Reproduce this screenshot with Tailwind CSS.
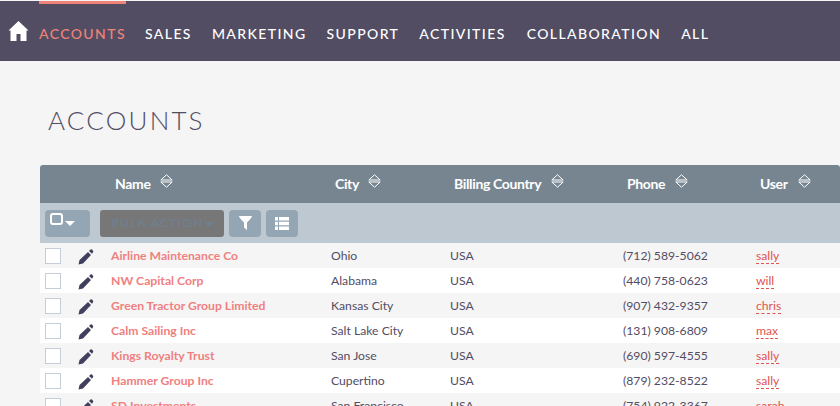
<!DOCTYPE html>
<html lang="en">
<head>
  <meta charset="UTF-8" />
  <title>Accounts</title>
  <script src="https://cdn.jsdelivr.net/npm/@tailwindcss/browser@4"></script>
</head>
<body class="bg-[#f5f5f5] h-[406px] overflow-hidden font-['Lato','Noto_Sans',sans-serif]">
  <nav class="mt-px h-[60px] bg-[#534d64] flex items-start text-white text-[14px] font-medium tracking-[1.4px]">
    <a class="ml-[8px] mt-[20px] w-[21px] mr-[10px]">
      <svg width="21" height="20" viewBox="0 0 21 20" fill="#fff"><path d="M10.5 0 L20.5 9.5 L18.5 9.5 L18.5 20 L12.5 20 L12.5 13 L8.5 13 L8.5 20 L2.5 20 L2.5 9.5 L0.5 9.5 Z"/></svg>
    </a>
    <a class="h-[60px] w-[87px] border-t-[3px] border-[#f08377] pt-[19px] text-[#f08377] mr-[19px]">ACCOUNTS</a>
    <a class="pt-[22px] mr-[20px]">SALES</a>
    <a class="pt-[22px] mr-[20px]">MARKETING</a>
    <a class="pt-[22px] mr-[20px]">SUPPORT</a>
    <a class="pt-[22px] mr-[21px]">ACTIVITIES</a>
    <a class="pt-[22px] mr-[20px]">COLLABORATION</a>
    <a class="pt-[22px]">ALL</a>
  </nav>

  <h1 class="ml-[48px] mt-[42px] h-[62px] text-[26px] leading-[34px] font-light tracking-[2.2px] text-[#534d64]">ACCOUNTS</h1>

  <div class="ml-[40px] w-[800px] text-[12.2px]">
    <div class="h-[38px] pb-[2px] bg-[#778591] rounded-t-[3px] grid grid-cols-[70px_220px_119px_173px_133px_85px] items-center text-white font-bold text-[14px] tracking-[-0.35px]">
      <div></div>
      <div class="pl-[5px] flex items-center gap-[9px]">Name
        <svg class="mb-[4px]" width="13" height="14" viewBox="0 0 13 14" fill="none" stroke="#fff" stroke-width="1"><path d="M0.8 6 L6.5 0.8 L12.2 6 Z M0.8 8 L6.5 13.2 L12.2 8 Z"/></svg>
      </div>
      <div class="pl-[5px] flex items-center gap-[9px]">City
        <svg class="mb-[4px]" width="13" height="14" viewBox="0 0 13 14" fill="none" stroke="#fff" stroke-width="1"><path d="M0.8 6 L6.5 0.8 L12.2 6 Z M0.8 8 L6.5 13.2 L12.2 8 Z"/></svg>
      </div>
      <div class="pl-[5px] flex items-center gap-[10px] whitespace-nowrap">Billing Country
        <svg class="mb-[4px]" width="13" height="14" viewBox="0 0 13 14" fill="none" stroke="#fff" stroke-width="1"><path d="M0.8 6 L6.5 0.8 L12.2 6 Z M0.8 8 L6.5 13.2 L12.2 8 Z"/></svg>
      </div>
      <div class="pl-[5px] flex items-center gap-[10px]">Phone
        <svg class="mb-[4px]" width="13" height="14" viewBox="0 0 13 14" fill="none" stroke="#fff" stroke-width="1"><path d="M0.8 6 L6.5 0.8 L12.2 6 Z M0.8 8 L6.5 13.2 L12.2 8 Z"/></svg>
      </div>
      <div class="pl-[5px] flex items-center gap-[10px]">User
        <svg class="mb-[4px]" width="13" height="14" viewBox="0 0 13 14" fill="none" stroke="#fff" stroke-width="1"><path d="M0.8 6 L6.5 0.8 L12.2 6 Z M0.8 8 L6.5 13.2 L12.2 8 Z"/></svg>
      </div>
    </div>

    <div class="h-[40px] bg-[#bec8d1] flex items-center pl-[5px]">
      <button class="w-[45px] h-[27px] rounded-[4px] bg-[#94a5b4] flex items-center pl-[5px]">
        <span class="block w-[13px] h-[12px] border-[2px] border-white rounded-[3px] mb-[8px]"></span>
        <span class="block ml-[2px] mt-[1px] border-x-[5px] border-x-transparent border-t-[5px] border-t-white"></span>
      </button>
      <button class="ml-[10px] w-[124px] h-[27px] rounded-[3px] bg-[#777777] flex items-center pl-[11px] text-[#6f7f8e] text-[12px] font-bold tracking-[1.2px] whitespace-nowrap">BULK ACTION
        <span class="block mt-[3px] border-x-[5px] border-x-transparent border-t-[5px] border-t-[#6f7f8e]"></span>
      </button>
      <button class="ml-[5px] w-[32px] h-[27px] rounded-[4px] bg-[#94a5b4] flex items-center justify-center">
        <svg width="13" height="14" viewBox="0 0 13 14" fill="#fff"><path d="M0 0 H13 Q13 1.5 8 6.5 V14 L5 11.5 V6.5 Q0 1.5 0 0 Z"/></svg>
      </button>
      <button class="ml-[5px] w-[32px] h-[27px] rounded-[4px] bg-[#94a5b4] flex items-center justify-center">
        <svg width="14" height="13" viewBox="0 0 14 13" fill="#fff"><path d="M0 0 H3 V3.5 H0 Z M4 0 H14 V3.5 H4 Z M0 4.75 H3 V8.25 H0 Z M4 4.75 H14 V8.25 H4 Z M0 9.5 H3 V13 H0 Z M4 9.5 H14 V13 H4 Z"/></svg>
      </button>
    </div>

    <div class="h-[25px] pt-px bg-[#f5f5f5] grid grid-cols-[71px_220px_119px_173px_133px_84px] items-center text-[#534d64]">
      <div class="flex items-center pl-[5px] gap-[17px]">
        <span class="block w-4 h-4 bg-white border border-[#c5ced6]"></span>
        <svg class="mt-[2px]" width="16" height="16" viewBox="0 0 16 16" fill="#40405e"><path d="M0.5 15.5 L1.5 11 L10 3 L13 6 L5 14.5 Z M11 2 L12.5 0.6 Q13.2 0 14 0.6 L15 1.8 Q15.6 2.5 15 3.2 L14 4.8 Z"/></svg>
      </div>
      <a class="font-bold text-[#f08080] whitespace-nowrap">Airline Maintenance Co</a>
      <div>Ohio</div>
      <div>USA</div>
      <div>(712) 589-5062</div>
      <div><span class="text-[#e2544f] border-b border-dashed border-[#e2544f]">sally</span></div>
    </div>
    <div class="h-[25px] pt-px bg-white grid grid-cols-[71px_220px_119px_173px_133px_84px] items-center text-[#534d64]">
      <div class="flex items-center pl-[5px] gap-[17px]">
        <span class="block w-4 h-4 bg-white border border-[#c5ced6]"></span>
        <svg class="mt-[2px]" width="16" height="16" viewBox="0 0 16 16" fill="#40405e"><path d="M0.5 15.5 L1.5 11 L10 3 L13 6 L5 14.5 Z M11 2 L12.5 0.6 Q13.2 0 14 0.6 L15 1.8 Q15.6 2.5 15 3.2 L14 4.8 Z"/></svg>
      </div>
      <a class="font-bold text-[#f08080] whitespace-nowrap">NW Capital Corp</a>
      <div>Alabama</div>
      <div>USA</div>
      <div>(440) 758-0623</div>
      <div><span class="text-[#e2544f] border-b border-dashed border-[#e2544f]">will</span></div>
    </div>
    <div class="h-[25px] pt-px bg-[#f5f5f5] grid grid-cols-[71px_220px_119px_173px_133px_84px] items-center text-[#534d64]">
      <div class="flex items-center pl-[5px] gap-[17px]">
        <span class="block w-4 h-4 bg-white border border-[#c5ced6]"></span>
        <svg class="mt-[2px]" width="16" height="16" viewBox="0 0 16 16" fill="#40405e"><path d="M0.5 15.5 L1.5 11 L10 3 L13 6 L5 14.5 Z M11 2 L12.5 0.6 Q13.2 0 14 0.6 L15 1.8 Q15.6 2.5 15 3.2 L14 4.8 Z"/></svg>
      </div>
      <a class="font-bold text-[#f08080] whitespace-nowrap">Green Tractor Group Limited</a>
      <div>Kansas City</div>
      <div>USA</div>
      <div>(907) 432-9357</div>
      <div><span class="text-[#e2544f] border-b border-dashed border-[#e2544f]">chris</span></div>
    </div>
    <div class="h-[25px] pt-px bg-white grid grid-cols-[71px_220px_119px_173px_133px_84px] items-center text-[#534d64]">
      <div class="flex items-center pl-[5px] gap-[17px]">
        <span class="block w-4 h-4 bg-white border border-[#c5ced6]"></span>
        <svg class="mt-[2px]" width="16" height="16" viewBox="0 0 16 16" fill="#40405e"><path d="M0.5 15.5 L1.5 11 L10 3 L13 6 L5 14.5 Z M11 2 L12.5 0.6 Q13.2 0 14 0.6 L15 1.8 Q15.6 2.5 15 3.2 L14 4.8 Z"/></svg>
      </div>
      <a class="font-bold text-[#f08080] whitespace-nowrap">Calm Sailing Inc</a>
      <div>Salt Lake City</div>
      <div>USA</div>
      <div>(131) 908-6809</div>
      <div><span class="text-[#e2544f] border-b border-dashed border-[#e2544f]">max</span></div>
    </div>
    <div class="h-[25px] pt-px bg-[#f5f5f5] grid grid-cols-[71px_220px_119px_173px_133px_84px] items-center text-[#534d64]">
      <div class="flex items-center pl-[5px] gap-[17px]">
        <span class="block w-4 h-4 bg-white border border-[#c5ced6]"></span>
        <svg class="mt-[2px]" width="16" height="16" viewBox="0 0 16 16" fill="#40405e"><path d="M0.5 15.5 L1.5 11 L10 3 L13 6 L5 14.5 Z M11 2 L12.5 0.6 Q13.2 0 14 0.6 L15 1.8 Q15.6 2.5 15 3.2 L14 4.8 Z"/></svg>
      </div>
      <a class="font-bold text-[#f08080] whitespace-nowrap">Kings Royalty Trust</a>
      <div>San Jose</div>
      <div>USA</div>
      <div>(690) 597-4555</div>
      <div><span class="text-[#e2544f] border-b border-dashed border-[#e2544f]">sally</span></div>
    </div>
    <div class="h-[25px] pt-px bg-white grid grid-cols-[71px_220px_119px_173px_133px_84px] items-center text-[#534d64]">
      <div class="flex items-center pl-[5px] gap-[17px]">
        <span class="block w-4 h-4 bg-white border border-[#c5ced6]"></span>
        <svg class="mt-[2px]" width="16" height="16" viewBox="0 0 16 16" fill="#40405e"><path d="M0.5 15.5 L1.5 11 L10 3 L13 6 L5 14.5 Z M11 2 L12.5 0.6 Q13.2 0 14 0.6 L15 1.8 Q15.6 2.5 15 3.2 L14 4.8 Z"/></svg>
      </div>
      <a class="font-bold text-[#f08080] whitespace-nowrap">Hammer Group Inc</a>
      <div>Cupertino</div>
      <div>USA</div>
      <div>(879) 232-8522</div>
      <div><span class="text-[#e2544f] border-b border-dashed border-[#e2544f]">sally</span></div>
    </div>
    <div class="h-[25px] pt-px bg-[#f5f5f5] grid grid-cols-[71px_220px_119px_173px_133px_84px] items-center text-[#534d64]">
      <div class="flex items-center pl-[5px] gap-[17px]">
        <span class="block w-4 h-4 bg-white border border-[#c5ced6]"></span>
        <svg class="mt-[2px]" width="16" height="16" viewBox="0 0 16 16" fill="#40405e"><path d="M0.5 15.5 L1.5 11 L10 3 L13 6 L5 14.5 Z M11 2 L12.5 0.6 Q13.2 0 14 0.6 L15 1.8 Q15.6 2.5 15 3.2 L14 4.8 Z"/></svg>
      </div>
      <a class="font-bold text-[#f08080] whitespace-nowrap">SD Investments</a>
      <div>San Francisco</div>
      <div>USA</div>
      <div>(754) 922-3367</div>
      <div><span class="text-[#e2544f] border-b border-dashed border-[#e2544f]">sarah</span></div>
    </div>
  </div>
</body>
</html>
